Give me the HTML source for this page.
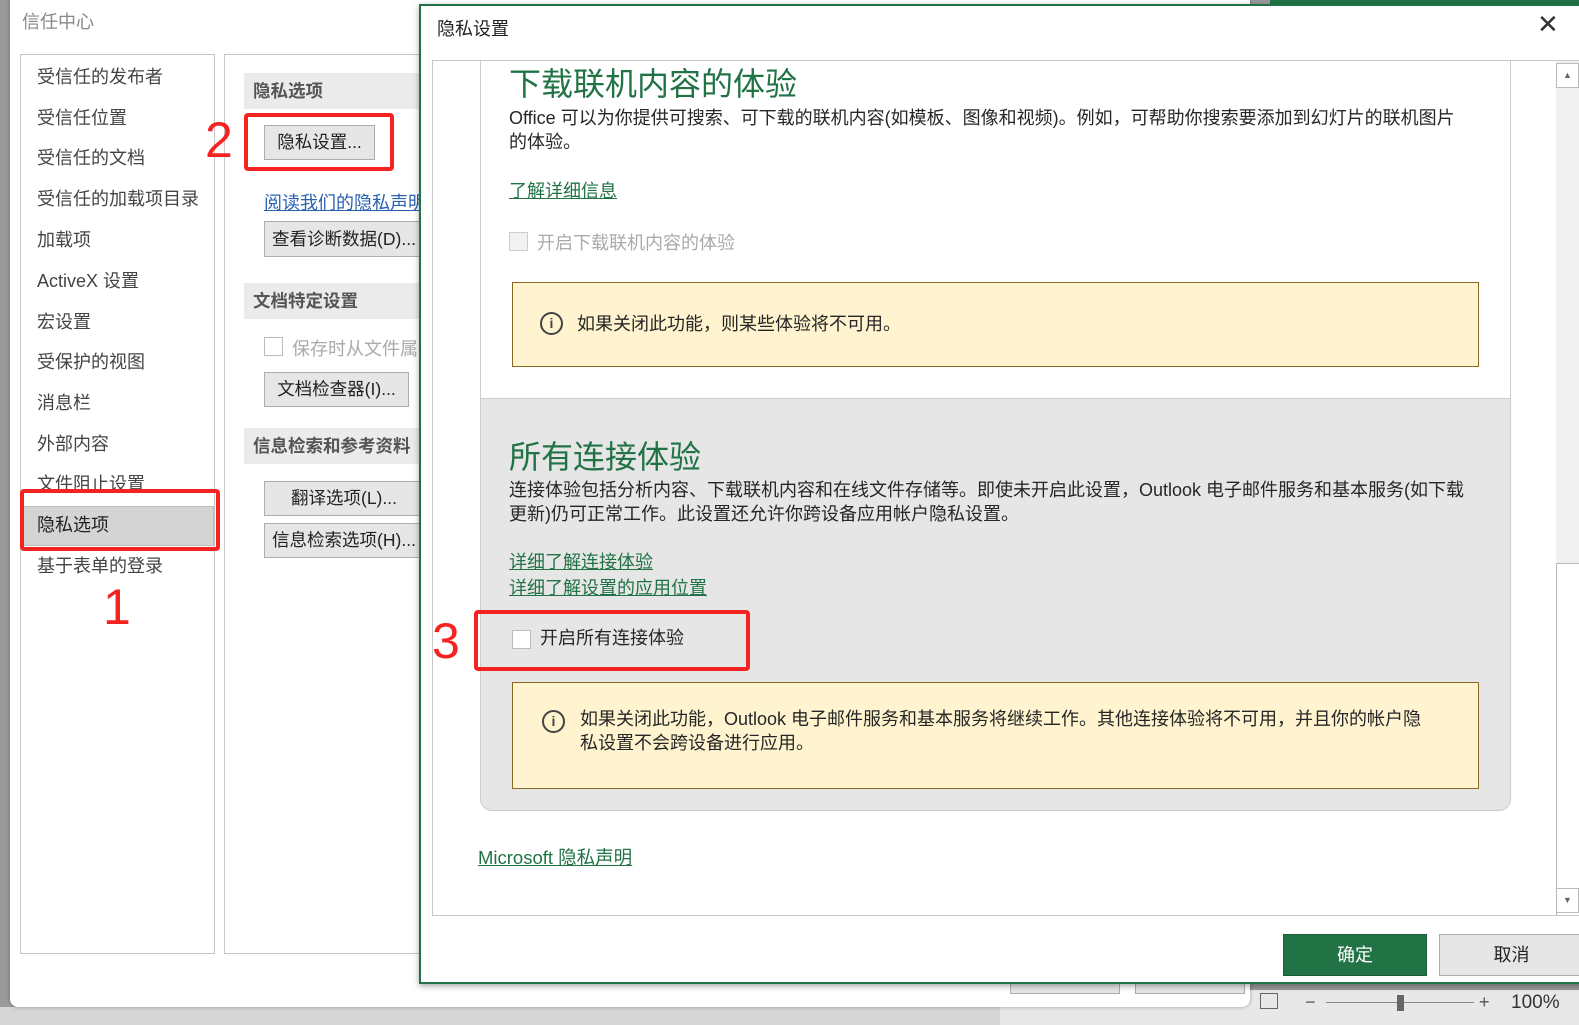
<!DOCTYPE html>
<html><head><meta charset="utf-8"><style>
*{margin:0;padding:0;box-sizing:border-box}
body{width:1579px;height:1025px;position:relative;overflow:hidden;background:#9a9a9a;font-family:"Liberation Sans","Noto Sans CJK SC",sans-serif;color:#262626}
.a{position:absolute;white-space:nowrap}
.nav{font-size:18px;color:#444}
.btn{position:absolute;background:#e6e6e6;border:1px solid #adadad;font-size:17.5px;color:#222;text-align:center;white-space:nowrap;overflow:hidden}
.hdr{position:absolute;background:#ebebeb;font-size:17.5px;font-weight:bold;color:#555;padding-left:9px;white-space:nowrap;overflow:hidden}
.red{position:absolute;border:4px solid #f52222;border-radius:4px}
.rn{position:absolute;color:#f52222;font-size:50px;line-height:1}
.g{color:#217346}
.lnk{color:#217346;text-decoration:underline;font-size:18px}
.yb{position:absolute;background:#fff4cf;border:1px solid #8a6a1e}
.info{position:absolute;width:23px;height:23px;border:2px solid #444;border-radius:50%;font-size:14px;font-weight:bold;text-align:center;line-height:19px;color:#444}
.cb{position:absolute;width:19px;height:19px;border:1px solid #bbb;background:#fff}
</style></head><body>
<div class="a" style="left:1270px;top:0;width:309px;height:6px;background:#217346"></div>
<div class="a" style="left:0;top:1007px;width:1579px;height:18px;background:#d6d6d6"></div>
<div class="a" style="left:1000px;top:990px;width:579px;height:35px;background:#e8e8e8"></div>
<div class="a" style="left:1260px;top:993px;width:18px;height:16px;border:1px solid #666"></div>
<div class="a" style="left:1305px;top:992px;font-size:18px;color:#555">−</div>
<div class="a" style="left:1326px;top:1002px;width:148px;height:1px;background:#888"></div>
<div class="a" style="left:1397px;top:995px;width:7px;height:16px;background:#666"></div>
<div class="a" style="left:1479px;top:992px;font-size:18px;color:#555">+</div>
<div class="a" style="left:1511px;top:992px;font-size:19px;color:#333">100%</div>
<div class="a" style="left:10px;top:0;width:1240px;height:1007px;background:#fff;border-radius:0 0 8px 8px;box-shadow:0 0 4px rgba(0,0,0,.3)"></div>
<div class="a" style="left:22px;top:8px;font-size:18px;color:#888">信任中心</div>
<div class="a" style="left:20px;top:54px;width:195px;height:900px;border:1px solid #c6c6c6"></div>
<div class="a" style="left:224px;top:54px;width:200px;height:900px;border:1px solid #c6c6c6"></div>
<div class="a nav" style="left:37px;top:63px">受信任的发布者</div>
<div class="a nav" style="left:37px;top:104px">受信任位置</div>
<div class="a nav" style="left:37px;top:144px">受信任的文档</div>
<div class="a nav" style="left:37px;top:185px">受信任的加载项目录</div>
<div class="a nav" style="left:37px;top:226px">加载项</div>
<div class="a nav" style="left:37px;top:267px">ActiveX 设置</div>
<div class="a nav" style="left:37px;top:308px">宏设置</div>
<div class="a nav" style="left:37px;top:348px">受保护的视图</div>
<div class="a nav" style="left:37px;top:389px">消息栏</div>
<div class="a nav" style="left:37px;top:430px">外部内容</div>
<div class="a nav" style="left:37px;top:470px">文件阻止设置</div>
<div class="a" style="left:22px;top:506px;width:192px;height:40px;background:#d4d4d4;border:1px solid #bbb"></div>
<div class="a nav" style="left:37px;top:511px;color:#222">隐私选项</div>
<div class="a nav" style="left:37px;top:552px">基于表单的登录</div>
<div class="red" style="left:20px;top:489px;width:200px;height:62px"></div>
<div class="rn" style="left:103px;top:582px">1</div>
<div class="hdr" style="left:244px;top:73px;width:176px;height:36px;line-height:36px">隐私选项</div>
<div class="btn" style="left:264px;top:125px;width:111px;height:35px;line-height:33px">隐私设置...</div>
<div class="red" style="left:244px;top:113px;width:150px;height:58px"></div>
<div class="rn" style="left:205px;top:115px">2</div>
<div class="a" style="left:264px;top:189px;font-size:18px;color:#2a62b0;text-decoration:underline;width:156px;overflow:hidden">阅读我们的隐私声明</div>
<div class="btn" style="left:264px;top:221px;width:160px;height:36px;line-height:34px">查看诊断数据(D)...</div>
<div class="hdr" style="left:244px;top:283px;width:176px;height:36px;line-height:36px">文档特定设置</div>
<div class="cb" style="left:264px;top:337px"></div>
<div class="a" style="left:292px;top:335px;font-size:18px;color:#aaa;width:128px;overflow:hidden">保存时从文件属性</div>
<div class="btn" style="left:264px;top:372px;width:145px;height:35px;line-height:33px">文档检查器(I)...</div>
<div class="hdr" style="left:244px;top:428px;width:176px;height:36px;line-height:36px">信息检索和参考资料</div>
<div class="btn" style="left:264px;top:481px;width:160px;height:35px;line-height:33px">翻译选项(L)...</div>
<div class="btn" style="left:264px;top:523px;width:160px;height:35px;line-height:33px">信息检索选项(H)...</div>
<div class="btn" style="left:1010px;top:970px;width:110px;height:24px"></div>
<div class="btn" style="left:1135px;top:970px;width:110px;height:24px"></div>
<div class="a" style="left:419px;top:4px;width:1170px;height:980px;background:#fff;border:2px solid #217346;box-shadow:0 2px 6px rgba(0,0,0,.35)"></div>
<div class="a" style="left:437px;top:15px;font-size:18px;color:#222">隐私设置</div>
<div class="a" style="left:1537px;top:10px;font-size:26px;color:#333;font-family:'DejaVu Sans',sans-serif">✕</div>
<div class="a" style="left:432px;top:60px;width:1160px;height:856px;border:1px solid #c8c8c8"></div>
<div class="a" style="left:1556px;top:61px;width:23px;height:503px;background:#f0f0f0"></div>
<div class="a" style="left:1556px;top:563px;width:23px;height:352px;border-left:1px solid #bbb;border-top:1px solid #bbb"></div>
<div class="a" style="left:1556px;top:63px;width:23px;height:25px;border:1px solid #bbb;background:#fff;font-size:9px;color:#666;text-align:center;line-height:23px">▲</div>
<div class="a" style="left:1556px;top:888px;width:23px;height:25px;border:1px solid #bbb;background:#fff;font-size:9px;color:#666;text-align:center;line-height:23px">▼</div>
<div class="a" style="left:480px;top:61px;width:1031px;height:338px;border-left:1px solid #ccc;border-right:1px solid #ccc;background:#fff"></div>
<div class="a g" style="left:509px;top:59px;font-size:32px">下载联机内容的体验</div>
<div class="a" style="left:509px;top:106px;font-size:18px;line-height:24px;white-space:normal;width:960px">Office 可以为你提供可搜索、可下载的联机内容(如模板、图像和视频)。例如，可帮助你搜索要添加到幻灯片的联机图片的体验。</div>
<div class="a lnk" style="left:509px;top:177px">了解详细信息</div>
<div class="cb" style="left:509px;top:232px;background:#f2f2f2;border-color:#ccc"></div>
<div class="a" style="left:537px;top:229px;font-size:18px;color:#aaa">开启下载联机内容的体验</div>
<div class="yb" style="left:512px;top:282px;width:967px;height:85px"></div>
<div class="info" style="left:540px;top:312px">i</div>
<div class="a" style="left:577px;top:310px;font-size:18px">如果关闭此功能，则某些体验将不可用。</div>
<div class="a" style="left:480px;top:398px;width:1031px;height:413px;background:#e6e6e6;border:1px solid #ccc;border-radius:0 0 12px 12px"></div>
<div class="a g" style="left:509px;top:432px;font-size:32px">所有连接体验</div>
<div class="a" style="left:509px;top:478px;font-size:18px;line-height:24px;white-space:normal;width:965px">连接体验包括分析内容、下载联机内容和在线文件存储等。即使未开启此设置，Outlook 电子邮件服务和基本服务(如下载更新)仍可正常工作。此设置还允许你跨设备应用帐户隐私设置。</div>
<div class="a lnk" style="left:509px;top:548px">详细了解连接体验</div>
<div class="a lnk" style="left:509px;top:574px">详细了解设置的应用位置</div>
<div class="cb" style="left:512px;top:630px"></div>
<div class="a" style="left:540px;top:624px;font-size:18px">开启所有连接体验</div>
<div class="red" style="left:474px;top:610px;width:276px;height:61px"></div>
<div class="rn" style="left:432px;top:616px">3</div>
<div class="yb" style="left:512px;top:682px;width:967px;height:107px"></div>
<div class="info" style="left:542px;top:710px">i</div>
<div class="a" style="left:580px;top:707px;font-size:18px;line-height:24px;white-space:normal;width:848px">如果关闭此功能，Outlook 电子邮件服务和基本服务将继续工作。其他连接体验将不可用，并且你的帐户隐私设置不会跨设备进行应用。</div>
<div class="a lnk" style="left:478px;top:844px;font-size:18.5px">Microsoft 隐私声明</div>
<div class="a" style="left:1283px;top:934px;width:144px;height:42px;background:#217346;border:1px solid #1a5c38;color:#fff;font-size:18px;text-align:center;line-height:40px">确定</div>
<div class="a" style="left:1439px;top:934px;width:145px;height:42px;background:#e6e6e6;border:1px solid #adadad;color:#222;font-size:18px;text-align:center;line-height:40px">取消</div>
</body></html>
